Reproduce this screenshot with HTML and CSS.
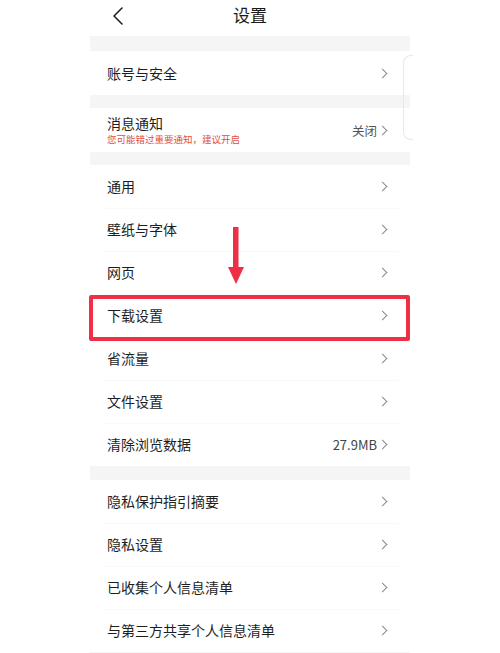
FILE: index.html
```html
<!DOCTYPE html>
<html lang="zh-CN">
<head>
<meta charset="utf-8">
<title>设置</title>
<link rel="stylesheet" href="styles.css">
</head>
<body>
<div class="phone">
  <header class="topbar">
    <svg class="back" width="14" height="18" viewBox="0 0 14 18"><path d="M11 1 L3 9 L11 17" fill="none" stroke="#222" stroke-width="1.6" stroke-linecap="round" stroke-linejoin="round"/></svg>
    <div class="title">设置</div>
  </header>
  <div class="band band-top"></div>
  <div class="row row-tall"><span class="label">账号与安全</span><span class="chev"></span></div>
  <div class="band band-sm"></div>
  <div class="row row-tall">
    <div class="stack"><span class="label">消息通知</span><span class="sub">您可能错过重要通知，建议开启</span></div>
    <span class="value">关闭</span><span class="chev"></span>
  </div>
  <div class="band band-sm"></div>
  <div class="row"><span class="label">通用</span><span class="chev"></span></div>
  <div class="row"><span class="label">壁纸与字体</span><span class="chev"></span></div>
  <div class="row"><span class="label">网页</span><span class="chev"></span></div>
  <div class="row highlight"><span class="label">下载设置</span><span class="chev"></span></div>
  <div class="row"><span class="label">省流量</span><span class="chev"></span></div>
  <div class="row"><span class="label">文件设置</span><span class="chev"></span></div>
  <div class="row"><span class="label">清除浏览数据</span><span class="value num">27.9MB</span><span class="chev"></span></div>
  <div class="band band-mid"></div>
  <div class="row"><span class="label">隐私保护指引摘要</span><span class="chev"></span></div>
  <div class="row"><span class="label">隐私设置</span><span class="chev"></span></div>
  <div class="row"><span class="label">已收集个人信息清单</span><span class="chev"></span></div>
  <div class="row"><span class="label">与第三方共享个人信息清单</span><span class="chev"></span></div>
  <div class="band band-sm"></div>

  <div class="side-handle"></div>
  <svg class="arrow" width="18" height="58" viewBox="0 0 18 58"><rect x="6" y="0" width="5.5" height="44" fill="#ee2f45"/><path d="M1 40 L17 40 L9 57 Z" fill="#ee2f45"/></svg>
</div>
</body>
</html>
```

FILE: styles.css
```css
* { box-sizing: border-box; }
html, body { margin: 0; padding: 0; background: #ffffff; }
body {
  font-family: "Noto Sans CJK SC", "Noto Sans", sans-serif;
  color: #1e1e1e;
}
.phone {
  position: relative;
  width: 320px;
  margin: 0 auto;
  background: #fff;
}
.topbar {
  height: 36px;
  display: flex;
  align-items: center;
  justify-content: center;
  position: relative;
}
.back {
  position: absolute;
  left: 21px;
  top: 7px;
}
.title {
  font-size: 17px;
  line-height: 20px;
  margin-top: -6px;
  color: #1a1a1a;
}
.band { background: #f5f5f5; }
.band-top { height: 15px; }
.band-sm { height: 13px; }
.band-mid { height: 14px; }
.row {
  height: 43px;
  display: flex;
  align-items: center;
  padding: 0 22px 0 17px;
  position: relative;
}
.row + .row::before {
  content: "";
  position: absolute;
  left: 12px;
  right: 12px;
  top: 0;
  height: 1px;
  background: #f9f9f9;
}
.row-tall { height: 44px; }
.label {
  font-size: 14px;
  line-height: 18px;
  flex: 1;
  margin-top: -1px;
}
.stack {
  flex: 1;
  display: flex;
  flex-direction: column;
  margin-top: 1px;
}
.stack .label { flex: none; }
.sub {
  font-size: 9.5px;
  line-height: 13px;
  color: #e0503c;
  margin-top: 1px;
}
.value {
  font-size: 12.5px;
  color: #555;
  margin-right: 4px;
}
.value.num { font-size: 13px; color: #444; }
.chev {
  width: 7px;
  height: 11px;
  position: relative;
}
.chev::after {
  content: "";
  position: absolute;
  left: -2px;
  top: 2px;
  width: 6px;
  height: 6px;
  border-top: 1.3px solid #8a8a8a;
  border-right: 1.3px solid #8a8a8a;
  transform: rotate(45deg);
}
.highlight::after {
  content: "";
  position: absolute;
  left: -1px;
  right: 0;
  top: 1px;
  bottom: -4px;
  border: 4px solid #ee2f45;
  border-radius: 2px;
}
.highlight + .row::before { display: none; }
.side-handle {
  position: absolute;
  left: 313px;
  top: 55px;
  width: 10px;
  height: 85px;
  border: 1px solid #e8e8e8;
  border-right: none;
  border-radius: 8px 0 0 8px;
}
.arrow {
  position: absolute;
  left: 137px;
  top: 227px;
}
```
